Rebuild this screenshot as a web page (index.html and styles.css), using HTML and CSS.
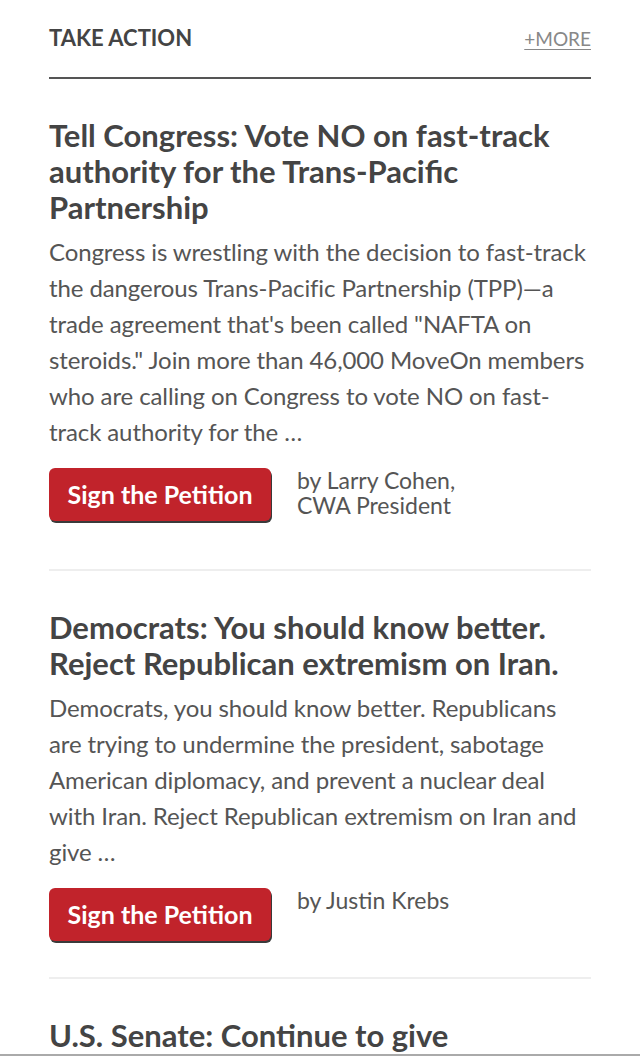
FILE: index.html
```html
<!DOCTYPE html>
<html lang="en">
<head>
    <meta charset="UTF-8">
    <meta name="viewport" content="width=device-width, initial-scale=1.0">
    <title>Take Action</title>
    <link rel="stylesheet" href="styles.css">
</head>
<body>
<div class="container">
    <div class="section-head">
        <h3>Take Action</h3>
        <a href="#" class="more">+More</a>
    </div>

    <div class="action">
        <h2>Tell Congress: Vote NO on fast-track authority for the Trans-Pacific Partnership</h2>
        <p class="summary">Congress is wrestling with the decision to fast-track the dangerous Trans-Pacific Partnership (TPP)—a trade agreement that's been called "NAFTA on steroids." Join more than 46,000 MoveOn members who are calling on Congress to vote NO on fast-track authority for the …</p>
        <div class="action-foot">
            <a href="#" class="btn">Sign the Petition</a>
            <span class="byline">by Larry Cohen,<br>CWA President</span>
        </div>
    </div>

    <div class="action action-short">
        <h2>Democrats: You should know better. Reject Republican extremism on Iran.</h2>
        <p class="summary">Democrats, you should know better. Republicans are trying to undermine the president, sabotage American diplomacy, and prevent a nuclear deal with Iran. Reject Republican extremism on Iran and give …</p>
        <div class="action-foot">
            <a href="#" class="btn">Sign the Petition</a>
            <span class="byline">by Justin Krebs</span>
        </div>
    </div>

    <div class="action">
        <h2>U.S. Senate: Continue to give</h2>
    </div>
</div>
<div class="bottom-bar"></div>
</body>
</html>
```

FILE: styles.css
```css
* {
    margin: 0;
    padding: 0;
    box-sizing: border-box;
}

body {
    background: #ffffff;
    color: #555555;
    font-family: Lato, 'Open Sans', Arial, sans-serif;
    overflow: hidden;
    height: 1056px;
}

.container {
    padding: 0 49px;
}

.section-head {
    display: flex;
    justify-content: space-between;
    align-items: baseline;
    padding-top: 24px;
    height: 79px;
    border-bottom: 2px solid #555555;
}

.section-head h3 {
    font-size: 22px;
    font-weight: 700;
    text-transform: uppercase;
    color: #444444;
}

.more {
    font-size: 19px;
    color: #888888;
    text-transform: uppercase;
    text-decoration: underline;
    text-underline-offset: 3px;
}

.action {
    padding: 38px 0 48px;
    border-bottom: 2px solid #eeeeee;
}

.action-short {
    padding-bottom: 36px;
}

.action:last-child {
    border-bottom: none;
}

.action h2 {
    font-size: 31px;
    line-height: 36px;
    font-weight: 700;
    color: #444444;
}

.summary {
    margin-top: 9px;
    font-size: 24px;
    line-height: 36px;
    color: #555555;
    letter-spacing: -0.1px;
}

.action-foot {
    display: flex;
    align-items: flex-start;
    margin-top: 18px;
}

.btn {
    display: block;
    width: 222px;
    height: 53px;
    line-height: 53px;
    text-align: center;
    background: #c1232b;
    color: #ffffff;
    font-size: 25px;
    font-weight: 700;
    text-decoration: none;
    border-radius: 6px;
    box-shadow: 1px 2px 0 #3a3a3a;
}

.byline {
    margin-left: 26px;
    font-size: 23px;
    line-height: 25px;
    color: #555555;
}

.bottom-bar {
    position: fixed;
    left: 0;
    right: 0;
    bottom: 0;
    height: 2px;
    background: #aaaaaa;
}
```
